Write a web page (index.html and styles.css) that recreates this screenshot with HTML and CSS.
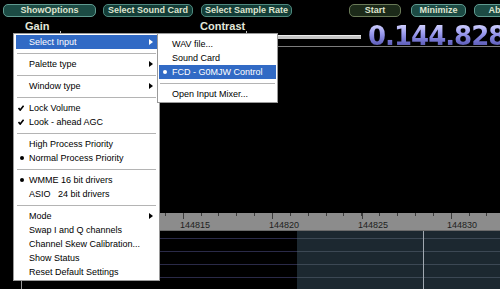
FILE: index.html
```html
<!DOCTYPE html>
<html lang="en">
<head>
    <meta charset="UTF-8">
    <meta name="viewport" content="width=device-width, initial-scale=1.0">
    <title>SDR Receiver</title>
    <link rel="stylesheet" href="styles.css">
</head>
<body>
    <div class="app">
        <!-- Top button bar -->
        <div class="toolbar">
            <button class="btn btn-options">ShowOptions</button>
            <button class="btn btn-dark btn-card">Select Sound Card</button>
            <button class="btn btn-dark btn-rate">Select Sample Rate</button>
            <span class="toolbar-spacer"></span>
            <button class="btn btn-start">Start</button>
            <button class="btn btn-min">Minimize</button>
            <button class="btn btn-about">About</button>
        </div>

        <!-- Sliders and frequency readout -->
        <div class="header">
            <div class="control control-gain">
                <div class="control-label">Gain</div>
                <div class="slider"><span class="slider-mark mark-gain"></span></div>
            </div>
            <div class="header-right">
                <div class="control control-contrast">
                    <div class="control-label">Contrast</div>
                    <div class="slider"><span class="slider-mark mark-contrast"></span></div>
                </div>
                <div class="readout">0.144.828</div>
            </div>
        </div>

        <!-- Spectrum display -->
        <div class="display">
            <div class="spectrum"></div>
            <div class="ruler">
                <span class="tick-major" style="left: 161px"></span>
                <span class="tick-major" style="left: 250px"></span>
                <span class="tick-major" style="left: 340px"></span>
                <span class="tick-major" style="left: 429px"></span>
                <span class="ruler-label" style="left: 158px">144815</span>
                <span class="ruler-label" style="left: 247px">144820</span>
                <span class="ruler-label" style="left: 336px">144825</span>
                <span class="ruler-label" style="left: 425px">144830</span>
            </div>
            <div class="plot">
                <div class="passband"></div>
                <div class="cursor"></div>
            </div>
        </div>

        <!-- Options menu -->
        <div class="menu main-menu">
            <div class="menu-item active"><span class="mark"></span><span>Select Input</span><span class="arrow"></span></div>
            <div class="menu-sep"></div>
            <div class="menu-item"><span class="mark"></span><span>Palette type</span><span class="arrow"></span></div>
            <div class="menu-sep"></div>
            <div class="menu-item"><span class="mark"></span><span>Window type</span><span class="arrow"></span></div>
            <div class="menu-sep"></div>
            <div class="menu-item"><span class="mark"><svg class="check" width="6" height="6" viewBox="0 0 6 6"><polyline points="0.5,3 2.2,5.1 5.6,0.7"/></svg></span><span>Lock Volume</span></div>
            <div class="menu-item"><span class="mark"><svg class="check" width="6" height="6" viewBox="0 0 6 6"><polyline points="0.5,3 2.2,5.1 5.6,0.7"/></svg></span><span>Look - ahead AGC</span></div>
            <div class="menu-sep"></div>
            <div class="menu-item"><span class="mark"></span><span>High Process Priority</span></div>
            <div class="menu-item"><span class="mark"><span class="bullet"></span></span><span>Normal Process Priority</span></div>
            <div class="menu-sep"></div>
            <div class="menu-item"><span class="mark"><span class="bullet"></span></span><span>WMME 16 bit drivers</span></div>
            <div class="menu-item"><span class="mark"></span><span class="pre">ASIO   24 bit drivers</span></div>
            <div class="menu-sep"></div>
            <div class="menu-item"><span class="mark"></span><span>Mode</span><span class="arrow"></span></div>
            <div class="menu-item"><span class="mark"></span><span>Swap I and Q channels</span></div>
            <div class="menu-item"><span class="mark"></span><span>Channel Skew Calibration...</span></div>
            <div class="menu-item"><span class="mark"></span><span>Show Status</span></div>
            <div class="menu-item"><span class="mark"></span><span>Reset Default Settings</span></div>
        </div>

        <!-- Select Input submenu -->
        <div class="menu sub-menu">
            <div class="menu-item"><span class="mark"></span><span>WAV file...</span></div>
            <div class="menu-item"><span class="mark"></span><span>Sound Card</span></div>
            <div class="menu-item active"><span class="mark"><span class="bullet"></span></span><span>FCD - G0MJW Control</span></div>
            <div class="menu-sep"></div>
            <div class="menu-item"><span class="mark"></span><span>Open Input Mixer...</span></div>
        </div>
    </div>
</body>
</html>
```

FILE: styles.css
```css
html, body {
    margin: 0;
    padding: 0;
    background-color: #000;
}
.app {
    position: relative;
    width: 500px;
    height: 289px;
    overflow: hidden;
    background-color: #000;
    display: flex;
    flex-direction: column;
    font-family: "Liberation Sans", Arial, sans-serif;
}

/* Toolbar */
.toolbar {
    display: flex;
    align-items: flex-start;
    height: 20px;
    padding: 4px 0 0 3px;
    box-sizing: border-box;
    flex-shrink: 0;
}
.btn {
    flex-shrink: 0;
    height: 13px;
    padding: 0;
    border: 1px solid #609b90;
    border-radius: 5px;
    background-color: #1c4b44;
    color: #dfe4cf;
    font-family: "Liberation Sans", Arial, sans-serif;
    font-weight: bold;
    font-size: 9px;
    line-height: 11px;
    white-space: nowrap;
}
.btn-dark {
    background-color: #133d37;
    border-color: #4f897e;
}
.btn-options { width: 93px; }
.btn-card { width: 90px; margin-left: 7px; }
.btn-rate { width: 91px; margin-left: 8px; }
.toolbar-spacer { width: 57px; flex-shrink: 0; }
.btn-start {
    width: 52px;
    background-color: #1c2a19;
    border-color: #6a7a58;
}
.btn-min { width: 55px; margin-left: 10px; }
.btn-about { width: 55px; margin-left: 8px; }

/* Header */
.header {
    display: flex;
    height: 27px;
    flex-shrink: 0;
}
.control {
    display: flex;
    flex-direction: column;
}
.control-gain {
    margin-left: 25px;
    width: 165px;
}
.header-right {
    flex: 1;
    min-width: 0;
    display: flex;
    border-bottom: 1px solid #7c7c7c;
    box-sizing: border-box;
}
.control-contrast {
    margin-left: 10px;
    width: 161px;
    flex-shrink: 0;
}
.control-label {
    color: #e3e7da;
    font-weight: bold;
    font-size: 11px;
    line-height: 12px;
}
.slider {
    position: relative;
    margin-top: 3px;
    height: 3px;
    background-color: #c4c4c4;
    border-top: 1px solid #ececec;
}
.slider-mark {
    position: absolute;
    top: -5px;
    width: 1px;
    height: 3px;
    background-color: #bfbfbf;
}
.mark-gain { left: 35px; }
.mark-contrast { left: 46px; }
.readout {
    flex-shrink: 0;
    align-self: flex-end;
    margin: 0 0 -2px 7px;
    font-family: "DejaVu Sans", sans-serif;
    font-weight: bold;
    font-size: 26px;
    line-height: 24px;
    letter-spacing: -1px;
    white-space: nowrap;
    color: transparent;
    background: linear-gradient(to bottom, #d4d4ff 0%, #9a9aee 40%, #6c6cc8 75%, #5252a8 100%);
    -webkit-background-clip: text;
    background-clip: text;
}

/* Display */
.display {
    flex: 1;
    display: flex;
    flex-direction: column;
    margin-left: 21px;
    border-left: 1px solid #9a9a9a;
    min-height: 0;
}
.spectrum {
    flex: 1;
}
.ruler {
    position: relative;
    height: 18px;
    flex-shrink: 0;
    background-color: #8c8c8c;
    background-image: repeating-linear-gradient(to right, #3c3c3c 0, #3c3c3c 1px, transparent 1px, transparent 17.86px);
    background-size: 100% 3px;
    background-repeat: no-repeat;
    border-bottom: 1px solid #6a6a6a;
    box-sizing: border-box;
}
.tick-major {
    position: absolute;
    top: 0;
    width: 1px;
    height: 6px;
    background-color: #3c3c3c;
}
.ruler-label {
    position: absolute;
    top: 7px;
    font-size: 9px;
    line-height: 10px;
    color: #1e1e1e;
}
.plot {
    position: relative;
    height: 58px;
    flex-shrink: 0;
    background-image: repeating-linear-gradient(to bottom, transparent 0, transparent 7px, #2a2a48 7px, #2a2a48 8px, transparent 8px, transparent 13px);
}
.passband {
    position: absolute;
    top: 0;
    bottom: 0;
    left: 275px;
    right: 0;
    background-color: #1c2830;
    background-image: repeating-linear-gradient(to bottom, transparent 0, transparent 7px, #3c4854 7px, #3c4854 8px, transparent 8px, transparent 13px);
}
.cursor {
    position: absolute;
    top: 0;
    bottom: 0;
    left: 401px;
    width: 1px;
    background-color: #a0a8b0;
}

/* Menus */
.menu {
    position: absolute;
    background-color: #fff;
    border: 1px solid #9a9a9a;
    box-sizing: border-box;
    font-size: 9px;
    color: #000;
}
.main-menu {
    left: 13px;
    top: 33px;
    width: 147px;
    padding: 1px 2px 1px 2px;
}
.sub-menu {
    left: 157px;
    top: 33px;
    width: 121px;
    padding: 3px 1px 1px 1px;
}
.menu-item {
    display: grid;
    grid-template-columns: 13px 1fr 10px;
    align-items: center;
    height: 14px;
    line-height: 14px;
    white-space: nowrap;
}
.menu-item.active {
    background-color: #316ac5;
    color: #fff;
}
.pre {
    white-space: pre;
}
.mark {
    display: flex;
    align-items: center;
    padding-left: 2px;
}
.check {
    fill: none;
    stroke: #000;
    stroke-width: 1.6;
}
.bullet {
    display: block;
    width: 4px;
    height: 4px;
    margin-left: 2px;
    border-radius: 50%;
    background-color: #000;
}
.active .bullet {
    background-color: #fff;
}
.arrow {
    width: 0;
    height: 0;
    border-left: 4px solid #000;
    border-top: 3.5px solid transparent;
    border-bottom: 3.5px solid transparent;
    justify-self: start;
    margin-left: 2px;
}
.active .arrow {
    border-left-color: #fff;
}
.menu-sep {
    margin: 4px 1px 3px;
    border-top: 1px solid #b4b4b4;
}
```
